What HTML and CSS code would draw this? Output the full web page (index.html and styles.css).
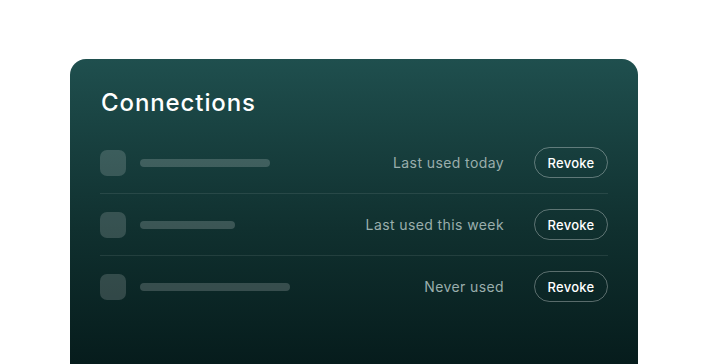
FILE: index.html
```html
<!DOCTYPE html>
<html>
<head>
  <meta charset="UTF-8"/>
  <title>Connections</title>
  <link rel="stylesheet" href="styles.css">
</head>
<body>
  <div class="card">
    <h2 class="card-title">Connections</h2>
    <div class="conn-list">
      <div class="conn-row">
        <div class="conn-icon"></div>
        <div class="conn-bar" style="width: 130px"></div>
        <span class="conn-status">Last used today</span>
        <button class="revoke">Revoke</button>
      </div>
      <div class="conn-row">
        <div class="conn-icon"></div>
        <div class="conn-bar" style="width: 95px"></div>
        <span class="conn-status">Last used this week</span>
        <button class="revoke">Revoke</button>
      </div>
      <div class="conn-row">
        <div class="conn-icon"></div>
        <div class="conn-bar" style="width: 150px"></div>
        <span class="conn-status">Never used</span>
        <button class="revoke">Revoke</button>
      </div>
    </div>
  </div>
</body>
</html>
```
FILE: styles.css
```css
html, body {
  margin: 0;
  padding: 0;
  height: 100%;
  overflow: hidden;
}
body {
  background-color: #fff;
  font-family: Inter, "Noto Sans", sans-serif;
  padding: 59px 0 0 70px;
  box-sizing: border-box;
}

.card {
  width: 568px;
  height: 360px;
  box-sizing: border-box;
  padding: 28px 30px 0 30px;
  border-radius: 16px;
  background: linear-gradient(180deg, #1f4f4e 0px, #10302f 170px, #061c1c 305px, #051919 360px);
  color: #fff;
}
.card-title {
  margin: 0 0 13px 1px;
  font-size: 24px;
  line-height: 32px;
  font-weight: 500;
  letter-spacing: 0.9px;
}

.conn-row {
  display: flex;
  align-items: center;
  height: 61px;
  border-bottom: 1px solid rgba(255, 255, 255, 0.09);
}
.conn-row:last-child {
  border-bottom: 0;
}
.conn-icon {
  width: 26px;
  height: 26px;
  border-radius: 7px;
  background-color: rgba(255, 255, 255, 0.16);
  flex: 0 0 auto;
}
.conn-bar {
  height: 8px;
  margin-left: 14px;
  border-radius: 4px;
  background-color: rgba(255, 255, 255, 0.18);
}
.conn-status {
  margin-left: auto;
  margin-right: 30px;
  font-size: 14px;
  letter-spacing: 0.4px;
  color: #9aaeac;
}
.revoke {
  width: 74px;
  height: 31px;
  border: 1px solid rgba(255, 255, 255, 0.32);
  border-radius: 16px;
  background: transparent;
  color: #fff;
  font-family: inherit;
  font-size: 13px;
  font-weight: 500;
  letter-spacing: 0.3px;
  padding: 0;
}
```
